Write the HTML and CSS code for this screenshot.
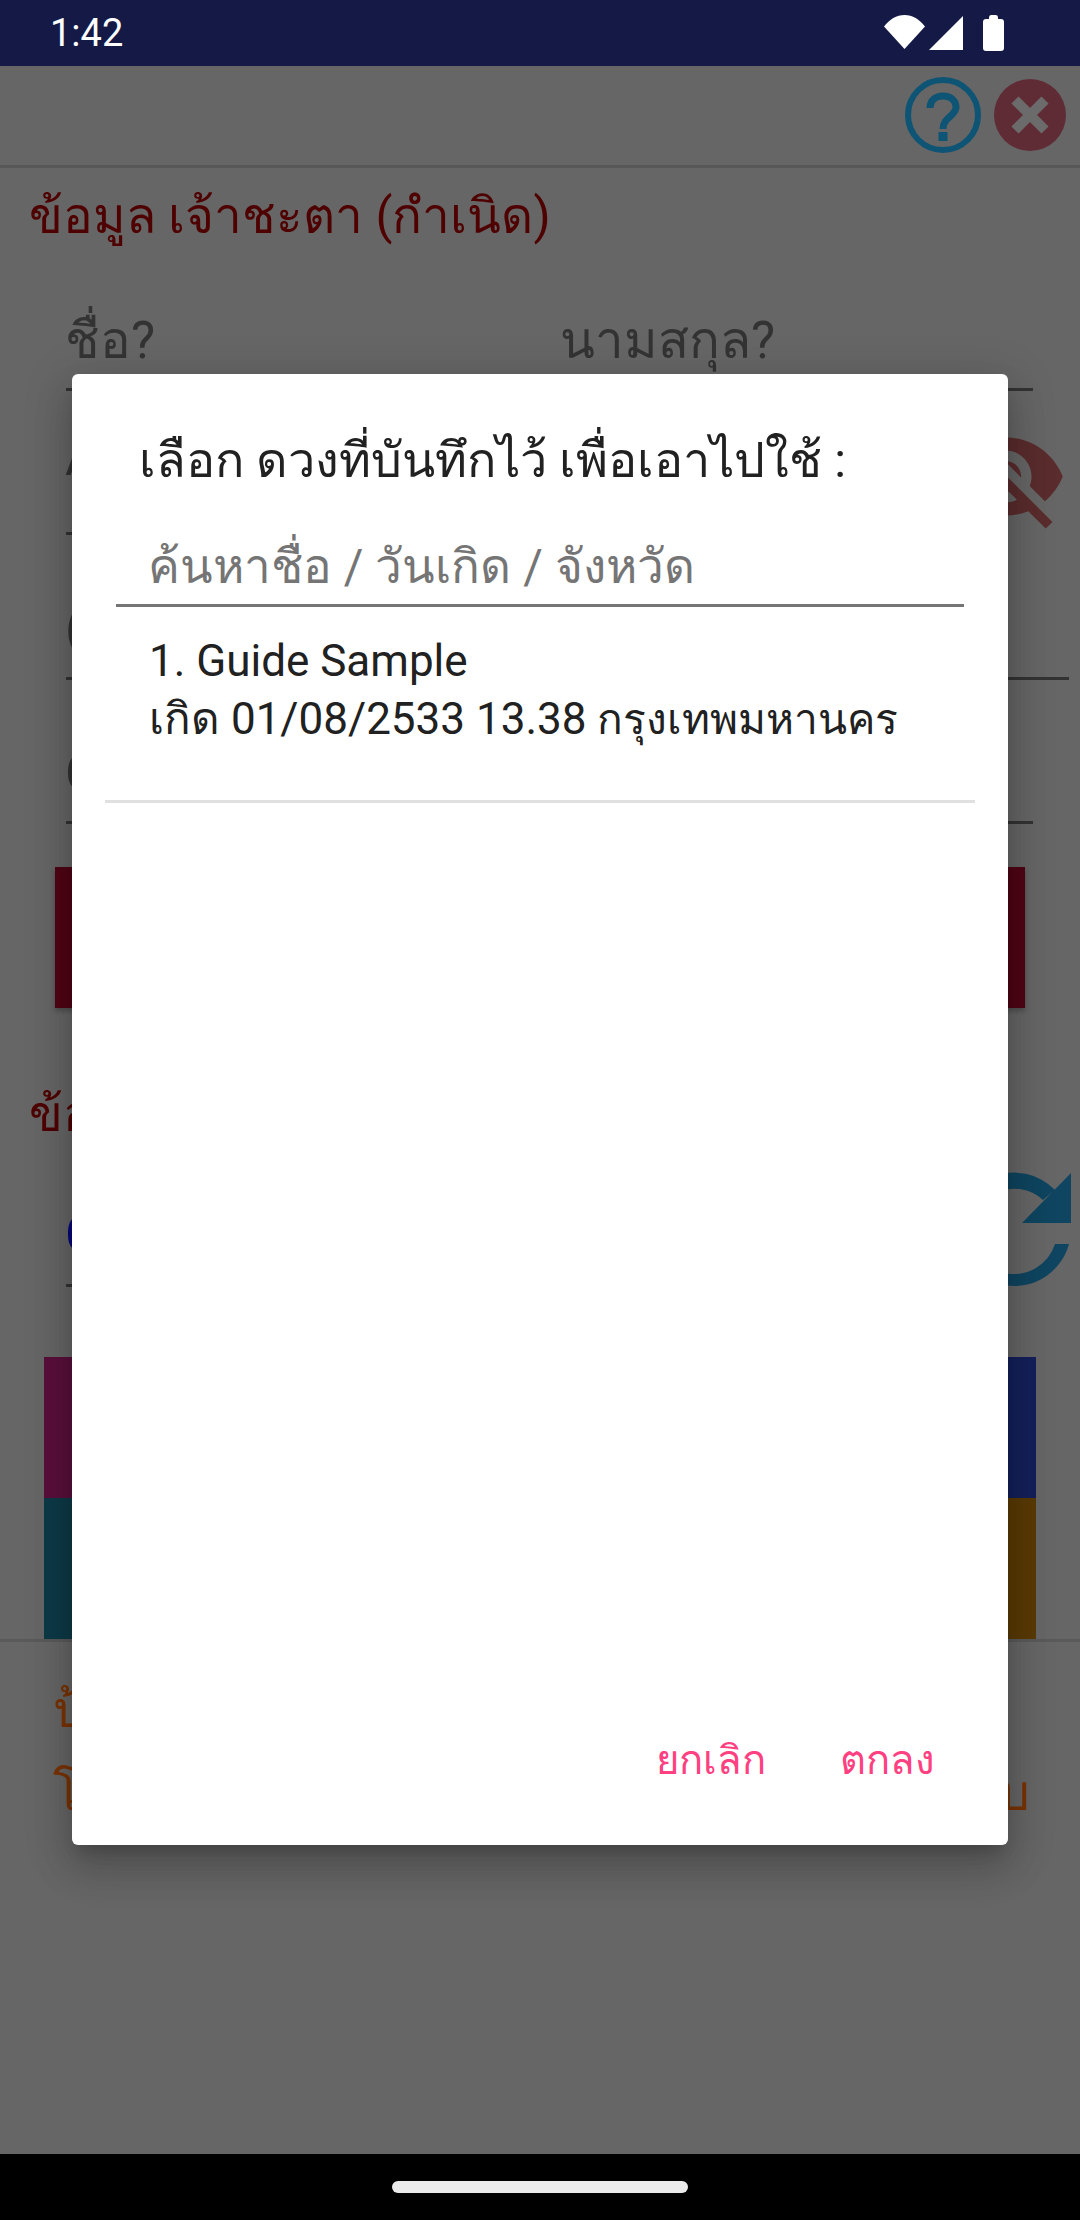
FILE: index.html
```html
<!DOCTYPE html>
<html lang="th">
<head>
<meta charset="utf-8">
<title>เลือก ดวงที่บันทึกไว้</title>
<link rel="stylesheet" href="styles.css">
</head>
<body>
<div class="screen">
  <header class="status">
    <span class="time">1:42</span>
    <div class="status-icons">
      <svg class="ic-wifi" viewBox="0 0 41 34"><path d="M0 11.500C5.500 4.300 12.500 0 20.500 0S35.500 4.300 41 11.500L20.500 34z"/></svg>
      <svg class="ic-signal" viewBox="0 0 34 34"><path d="M34 0V34H0z"/></svg>
      <svg class="ic-batt" viewBox="0 0 21 36"><path d="M6 2.500Q6 0 8 0H13Q15 0 15 2.500V4H18Q21 4 21 7V33Q21 36 18 36H3Q0 36 0 33V7Q0 4 3 4H6z"/></svg>
    </div>
  </header>

  <main class="page">
    <div class="topbar">
      <svg class="ic-help" viewBox="0 0 76 76">
        <circle cx="38" cy="38" r="35" class="help-ring"/>
        <path d="M25 31C25 23 31 19 38 19C46 19 51 24 51 30C51 39 38 40 38 52" class="help-hook"/>
        <rect x="33.500" y="55" width="9" height="9" class="help-dot"/>
      </svg>
      <svg class="ic-close" viewBox="0 0 72 72">
        <circle cx="36" cy="36" r="36" class="close-disc"/>
        <path d="M21 21L51 51M51 21L21 51" class="close-x"/>
      </svg>
    </div>

    <h2 class="heading">ข้อมูล เจ้าชะตา (กำเนิด)</h2>

    <div class="form">
      <div class="row row-names">
        <div class="field"><span class="label">ชื่อ?</span></div>
        <div class="field"><span class="label">นามสกุล?</span></div>
      </div>
      <div class="row row-birth">
        <div class="field"><span class="label">A</span></div>
        <svg class="ic-eye" viewBox="0 0 24 24"><path d="M12 7c2.760 0 5 2.240 5 5 0 .65-.13 1.260-.36 1.830l2.920 2.920c1.510-1.260 2.700-2.890 3.430-4.750-1.730-4.390-6-7.500-11-7.500-1.400 0-2.740.25-3.980.7l2.160 2.160C10.740 7.130 11.350 7 12 7zM2 4.270l2.280 2.280.46.46C3.080 8.300 1.780 10.020 1 12c1.730 4.390 6 7.500 11 7.500 1.550 0 3.030-.3 4.380-.84l.42.42L19.730 22 21 20.730 3.270 3 2 4.270zM7.530 9.800l1.550 1.550c-.05.21-.08.43-.08.65 0 1.660 1.340 3 3 3 .22 0 .44-.03.65-.08l1.550 1.550c-.67.33-1.410.53-2.200.53-2.760 0-5-2.240-5-5 0-.79.2-1.530.53-2.200zm4.310-.78l3.150 3.150.02-.16c0-1.660-1.340-3-3-3l-.17.01z"/></svg>
      </div>
      <div class="row row-time">
        <div class="field"><span class="label">(</span></div>
      </div>
      <div class="row row-place">
        <div class="field"><span class="label">G</span></div>
      </div>
    </div>

    <div class="redbar"></div>

    <h2 class="heading heading-second">ข้อมูล</h2>

    <div class="row row-target">
      <div class="field"><span class="label label-blue">C</span></div>
      <svg class="ic-sync" viewBox="945 1160 130 127">
        <path d="M957 1230A57 57 0 0 1 1055 1190L1043 1200A43 43 0 0 0 971 1230Z"/>
        <path d="M1071 1173V1223H1022z"/>
        <path d="M1069 1244A57 57 0 0 1 957 1230H971A43 43 0 0 0 1055 1244Z"/>
      </svg>
    </div>

    <div class="tiles">
      <div class="tile tile-purple"></div>
      <div class="tile tile-navy"></div>
      <div class="tile tile-teal"></div>
      <div class="tile tile-brown"></div>
    </div>

    <div class="notes">
      <p class="note">ป้อนข้อมูล</p>
      <p class="note note-split"><span>โปรด</span><span>บ</span></p>
    </div>
  </main>

  <footer class="navbar"><span class="pill"></span></footer>

  <section class="dialog">
    <h1 class="dlg-title">เลือก ดวงที่บันทึกไว้ เพื่อเอาไปใช้ :</h1>
    <div class="search">ค้นหาชื่อ / วันเกิด / จังหวัด</div>
    <div class="item">
      <div>1. Guide Sample</div>
      <div>เกิด 01/08/2533 13.38 <span class="place">กรุงเทพมหานคร</span></div>
    </div>
    <div class="actions">
      <span class="action">ยกเลิก</span>
      <span class="action">ตกลง</span>
    </div>
  </section>
</div>
</body>
</html>
```
FILE: styles.css
```css
* { box-sizing: border-box; }
html, body { margin: 0; padding: 0; }
body { font-family: Roboto, "Noto Sans", sans-serif; background: #666; }

.screen {
  position: relative;
  width: 1080px;
  height: 2220px;
  overflow: hidden;
  display: flex;
  flex-direction: column;
  background: #666;
}

/* status bar */
.status {
  height: 66px;
  flex: none;
  background: #141a45;
  color: #fff;
  display: flex;
  align-items: center;
  justify-content: space-between;
  padding: 0 76px 0 50px;
}
.time { font-size: 38px; line-height: 66px; }
.status-icons { display: flex; align-items: flex-start; height: 66px; }
.status-icons svg { fill: #fff; display: block; }
.ic-wifi { width: 41px; height: 34px; margin-top: 15px; }
.ic-signal { width: 34px; height: 34px; margin: 16px 0 0 4px; }
.ic-batt { width: 21px; height: 36px; margin: 15px 0 0 20px; }

/* page behind the dialog */
.page { flex: 1; min-height: 0; display: flex; flex-direction: column; }
.topbar {
  height: 102px;
  flex: none;
  border-bottom: 3px solid #585858;
  display: flex;
  justify-content: flex-end;
  align-items: flex-start;
  padding: 11px 14px 0 0;
}
.ic-help { width: 76px; height: 76px; margin-right: 1px; }
.help-ring { fill: none; stroke: #0e5474; stroke-width: 6; }
.help-hook { fill: none; stroke: #0e5474; stroke-width: 7; }
.help-dot { fill: #0e5474; }
.ic-close { width: 72px; height: 72px; margin: 2px 0 0 12px; }
.close-disc { fill: #5f2c36; }
.close-x { stroke: #6b6b6b; stroke-width: 10; fill: none; }

.heading {
  margin: 0;
  padding-left: 29px;
  font-size: 49.500px;
  font-weight: 400;
  line-height: 66px;
  height: 90px;
  padding-top: 15px;
  color: #4f0000;
}
.heading-second { height: 152px; padding-top: 73px; }

.form { display: flex; flex-direction: column; }
.row { display: flex; padding-left: 66px; }
.field {
  flex: 1;
  border-bottom: 3px solid #333;
  font-size: 51px;
  color: #333;
  line-height: 60px;
}
.label { display: inline-block; margin-left: -1px; }
.row-names { height: 133px; padding-right: 47px; }
.row-names .field { padding-top: 53px; }
.row-names .field:first-child { flex: 0 0 495px; }
.row-birth { height: 144px; padding-right: 12px; }
.row-birth .field { padding-top: 37px; }
.ic-eye { width: 125px; height: 125px; flex: none; fill: #5a2c2d; margin-top: 23px; }
.row-time { height: 145px; padding-right: 11px; }
.row-time .field { padding-top: 64px; }
.row-place { height: 144px; padding-right: 47px; }
.row-place .field { padding-top: 64px; }

.redbar {
  margin: 43px 55px 0;
  height: 141px;
  flex: none;
  background: #500514;
  box-shadow: 0 3px 5px rgba(0, 0, 0, .25);
}

.row-target { height: 127px; padding-right: 5px; }
.row-target .field { padding-top: 45px; }
.label-blue { color: #08087c; }
.ic-sync { width: 130px; height: 127px; flex: none; fill: #0f4560; }

.tiles {
  margin: 70px 44px 0;
  display: grid;
  grid-template-columns: 1fr 1fr;
  grid-auto-rows: 141px;
  flex: none;
}
.tile-purple { background: #5a0f3b; }
.tile-navy { background: #14205a; }
.tile-teal { background: #0d3a47; }
.tile-brown { background: #5a3a05; }

.notes {
  border-top: 3px solid #5a5a5a;
  padding: 38px 50px 0 53px;
  color: #7a3300;
  font-size: 50px;
}
.note { margin: 0; line-height: 60px; height: 83px; }
.note-split { display: flex; justify-content: space-between; }

/* navigation bar */
.navbar {
  height: 66px;
  flex: none;
  background: #000;
  display: flex;
  justify-content: center;
  align-items: center;
}
.pill { width: 296px; height: 12px; border-radius: 6px; background: #ebebeb; }

/* dialog */
.dialog {
  position: absolute;
  left: 72px;
  top: 374px;
  width: 936px;
  height: 1471px;
  background: #fff;
  border-radius: 6px;
  box-shadow: 0 24px 38px 3px rgba(0, 0, 0, .14), 0 9px 46px 8px rgba(0, 0, 0, .12), 0 11px 15px -7px rgba(0, 0, 0, .2);
  display: flex;
  flex-direction: column;
}
.dlg-title {
  margin: 0;
  padding: 54px 0 0 67px;
  height: 122px;
  font-size: 48.600px;
  font-weight: 400;
  line-height: 66px;
  color: #212121;
}
.search {
  margin: 0 44px;
  padding: 38px 0 0 32px;
  height: 111px;
  font-size: 47.700px;
  line-height: 66px;
  color: #757575;
  border-bottom: 3px solid #757575;
}
.item {
  margin: 0 33px;
  padding: 25px 0 0 44px;
  height: 196px;
  font-size: 44px;
  line-height: 58px;
  color: #212121;
  border-bottom: 3px solid #e0e0e0;
}
.place { font-size: 42.500px; }
.actions {
  margin-top: auto;
  height: 114px;
  padding: 0 73px 0 0;
  display: flex;
  justify-content: flex-end;
  gap: 74px;
  font-size: 40px;
  line-height: 60px;
  color: #ff4081;
}
```
